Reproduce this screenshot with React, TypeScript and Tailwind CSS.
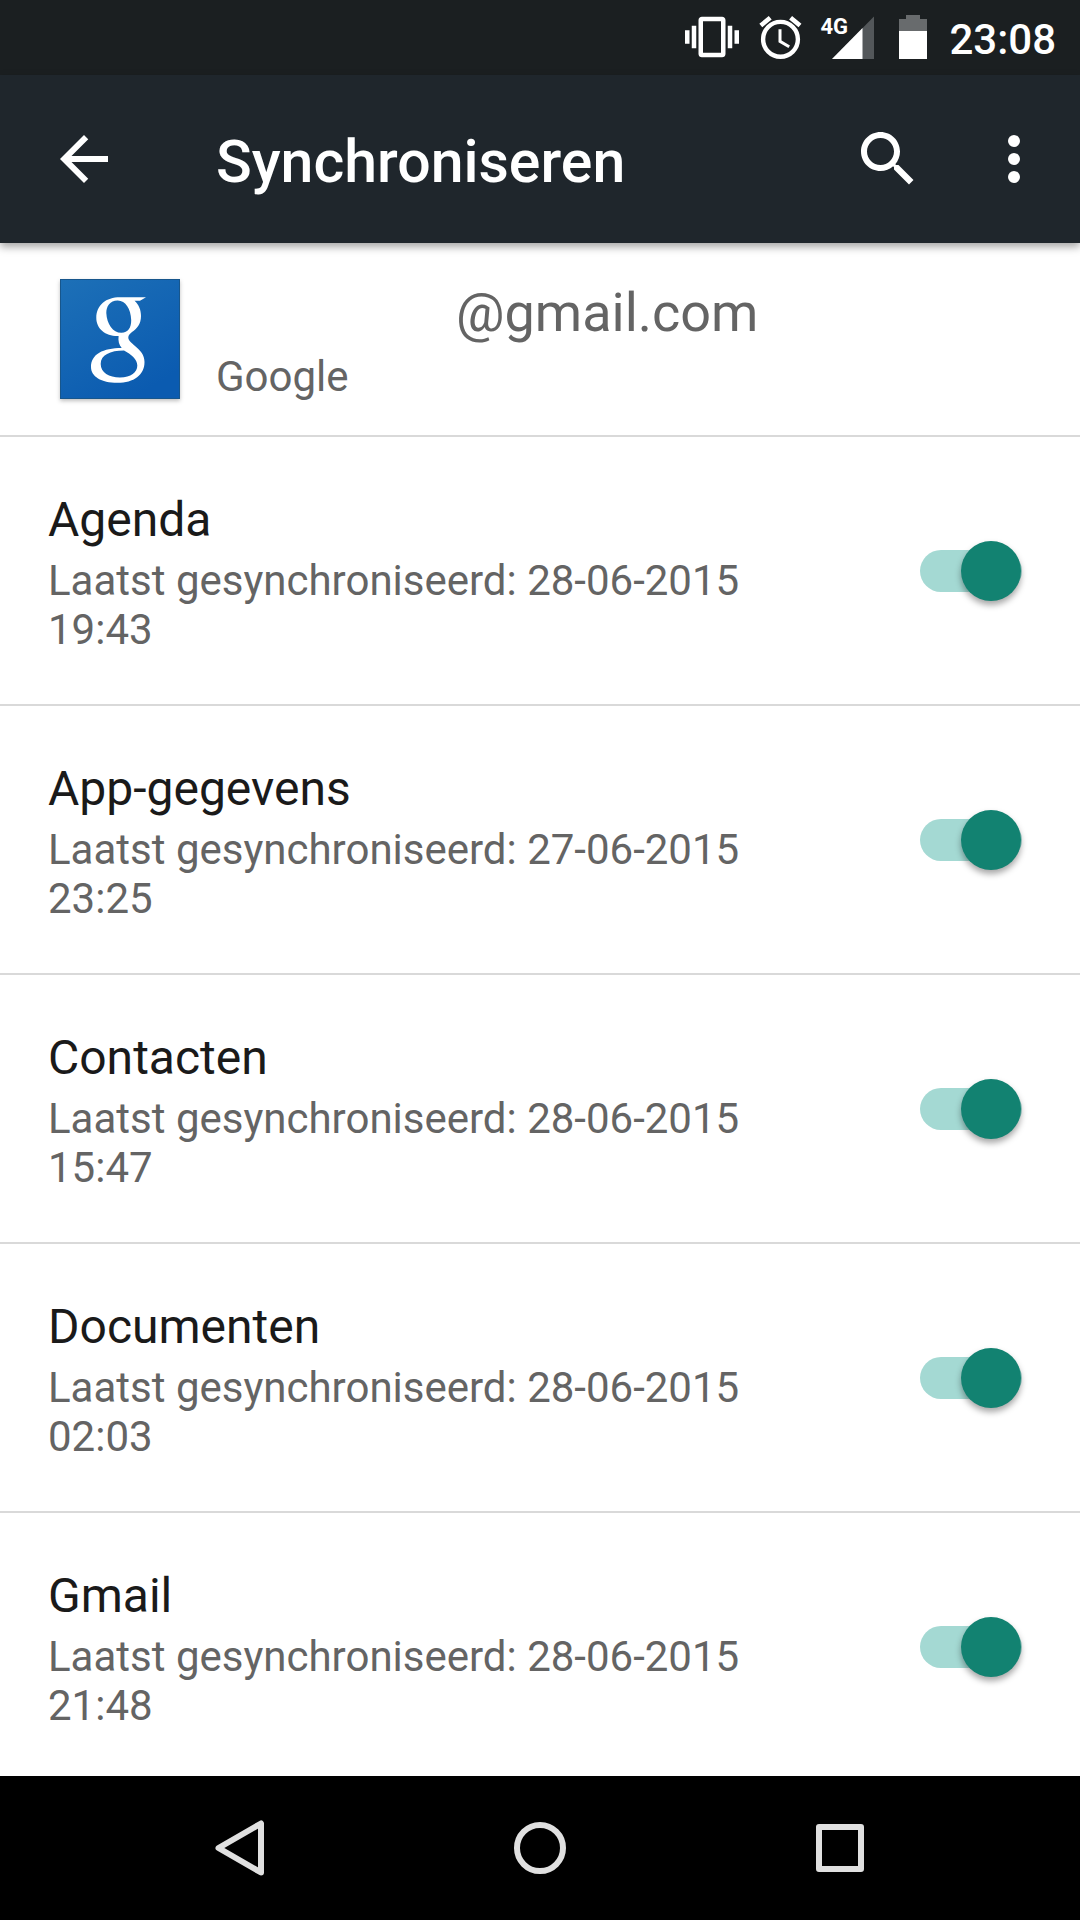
const accounts = [
  { name: "Agenda", date: "28-06-2015", time: "19:43" },
  { name: "App-gegevens", date: "27-06-2015", time: "23:25" },
  { name: "Contacten", date: "28-06-2015", time: "15:47" },
  { name: "Documenten", date: "28-06-2015", time: "02:03" },
  { name: "Gmail", date: "28-06-2015", time: "21:48" },
];

function StatusBar() {
  return (
    <div className="flex h-[75px] shrink-0 items-start justify-end bg-[#1b1f21] pt-[10px] pr-[24px] text-white">
      {/* Vibrate */}
      <svg className="mr-[17px] size-[54px]" viewBox="0 0 24 24" fill="currentColor" aria-hidden="true">
        <path d="M0 15h2V9H0v6zm3 2h2V7H3v10zm19-8v6h2V9h-2zm-3 8h2V7h-2v10zM16.5 3h-9C6.67 3 6 3.67 6 4.5v15c0 .83.67 1.5 1.5 1.5h9c.83 0 1.5-.67 1.5-1.5v-15c0-.83-.67-1.5-1.5-1.5zM16 19H8V5h8v14z" />
      </svg>

      {/* Alarm */}
      <svg className="mr-[10px] h-[54px] w-[50px]" viewBox="0 0 50 54" fill="none" stroke="currentColor" aria-hidden="true">
        <circle cx="24.5" cy="29.3" r="17.4" strokeWidth="4.4" />
        <path d="M4.8 15.6 14.2 7.8M34.6 7.8l9.4 7.8" strokeWidth="4.6" />
        <path d="M24 19.3v12l9.2 5.5" strokeWidth="3" />
      </svg>

      {/* Mobile signal */}
      <div className="relative mr-[17px] h-[54px] w-[58px]">
        <svg className="h-[54px] w-[58px]" viewBox="0 0 58 54" aria-hidden="true">
          <path d="M16 49 58 6.5V49z" fill="#53575a" />
          <path d="M16 49 46.5 18V49z" fill="white" />
        </svg>
        <span className="absolute top-[5px] left-[4px] text-[22px] leading-[24px] font-bold">4G</span>
      </div>

      {/* Battery */}
      <svg className="mr-[18px] h-[54px] w-[40px]" viewBox="0 0 40 54" aria-hidden="true">
        <path d="M8 9h7V5h14v4h7v12H8z" fill="#686b6d" />
        <path d="M8 21h28v28H8z" fill="white" />
      </svg>

      <span className="pt-[3px] text-[42px] leading-[54px] font-medium">23:08</span>
    </div>
  );
}

function AppBar() {
  return (
    <header className="relative z-10 flex h-[168px] shrink-0 items-center bg-[#1f262c] pr-[30px] pl-[48px] text-white shadow-[0_4px_8px_rgba(0,0,0,0.35)]">
      <button type="button" aria-label="Terug">
        <svg className="size-[72px]" viewBox="0 0 24 24" fill="currentColor">
          <path d="M20 11H7.83l5.59-5.59L12 4l-8 8 8 8 1.41-1.41L7.83 13H20v-2z" />
        </svg>
      </button>
      <h1 className="ml-[96px] flex-1 pt-[6px] text-[59px] leading-[70px] font-medium">Synchroniseren</h1>
      <button type="button" aria-label="Zoeken" className="mr-[54px]">
        <svg className="size-[72px]" viewBox="0 0 24 24" fill="currentColor">
          <path d="M15.5 14h-.79l-.28-.27C15.41 12.59 16 11.11 16 9.5 16 5.91 13.09 3 9.5 3S3 5.91 3 9.5 5.91 16 9.5 16c1.61 0 3.09-.59 4.23-1.57l.27.28v.79l5 4.99L20.49 19l-4.99-5zm-6 0C7.01 14 5 11.99 5 9.5S7.01 5 9.5 5 14 7.01 14 9.5 11.99 14 9.5 14z" />
        </svg>
      </button>
      <button type="button" aria-label="Meer opties">
        <svg className="size-[72px]" viewBox="0 0 24 24" fill="currentColor">
          <circle cx="12" cy="6" r="2" />
          <circle cx="12" cy="12" r="2" />
          <circle cx="12" cy="18" r="2" />
        </svg>
      </button>
    </header>
  );
}

function GoogleLogo() {
  return (
    <svg className="size-[120px] shadow-[0_2px_4px_rgba(0,0,0,0.25)]" viewBox="0 0 120 120" role="img" aria-label="Google">
      <defs>
        <linearGradient id="logo-blue" x1="0" y1="0" x2="0.6" y2="1">
          <stop offset="0" stopColor="#1d70b7" />
          <stop offset="1" stopColor="#0b5bb0" />
        </linearGradient>
      </defs>
      <rect width="120" height="120" fill="url(#logo-blue)" />
      <rect x="0.5" y="0.5" width="119" height="119" fill="none" stroke="#17568c" />
      <path
        fill="white"
        fillRule="evenodd"
        d="M86 18.3 80 21.8H74.5C79 26 81 31 81 37c0 8-4 12.500-9 16-2.500 2-3.700 3.500-3.700 5.500 0 3 2.700 5 6.700 8.500 5.500 4.500 9.500 9 9.500 16 0 13-10.500 20.800-27 20.800S31 97.500 31 88c0-13 12-19 30.700-19.100C59 66 58 62 58.600 57 46 57.500 36.300 50 36.300 39c0-13 9.700-20.700 23.700-20.700zM57.500 21.500C50 21.800 46.300 27 46.300 34c.5 11 6.700 20 15.200 19.800 6.500-.3 9.800-4.800 9.700-12.800-.4-11-5.700-19.700-13.700-19.500zM64 71.500c-14 0-23.300 4.500-23.300 13.500 0 8.500 8.300 13.400 19.300 13.400s17.300-4.900 17.300-11.900c0-6.500-6.300-11-13.300-15z"
      />
    </svg>
  );
}

function AccountHeader() {
  return (
    <div className="flex items-center border-b-2 border-[#d9d9d9] py-[34px] pl-[60px] text-[#646464]">
      <GoogleLogo />
      <div className="ml-[36px] pt-[4px]">
        <p className="pl-[240px] text-[54px] leading-[63px]">@gmail.com</p>
        <p className="mt-2 text-[42px] leading-[49px]">Google</p>
      </div>
    </div>
  );
}

function SyncRow({ name, date, time }: { name: string; date: string; time: string }) {
  return (
    <label className="flex items-center border-b-2 border-[#d9d9d9] py-[50px] pr-[58px] pl-[48px]">
      <span className="flex-1 pt-[5px]">
        <span className="block text-[48px] leading-[56px] text-[#1a1a1a]">{name}</span>
        <span className="mt-2 block text-[42px] leading-[49px] text-[#646464]">
          Laatst gesynchroniseerd: {date} {time}
        </span>
      </span>
      <input
        type="checkbox"
        role="switch"
        defaultChecked
        className="relative ml-[72px] h-[42px] w-[102px] shrink-0 appearance-none rounded-full bg-[#c4c4c4] before:absolute before:-top-[9px] before:left-0 before:size-[60px] before:rounded-full before:bg-[#f1f1f1] before:shadow-[0_4px_6px_rgba(0,0,0,0.35)] checked:bg-[#a4d9d3] checked:before:left-[41px] checked:before:bg-[#128271]"
      />
    </label>
  );
}

function NavBar() {
  return (
    <nav className="grid h-[144px] shrink-0 grid-cols-3 bg-black px-[90px] text-[#e0e0e0]">
      <button type="button" aria-label="Vorige" className="flex items-center justify-center">
        <svg className="size-[72px]" viewBox="0 0 72 72" fill="none" stroke="currentColor" strokeWidth="6" strokeLinejoin="round">
          <path d="M57 11.5v49L14.5 36z" />
        </svg>
      </button>
      <button type="button" aria-label="Startscherm" className="flex items-center justify-center">
        <svg className="size-[72px]" viewBox="0 0 72 72" fill="none" stroke="currentColor" strokeWidth="6">
          <circle cx="36" cy="36" r="23" />
        </svg>
      </button>
      <button type="button" aria-label="Overzicht" className="flex items-center justify-center">
        <svg className="size-[72px]" viewBox="0 0 72 72" fill="none" stroke="currentColor" strokeWidth="6" strokeLinejoin="round">
          <rect x="15" y="15" width="42" height="42" />
        </svg>
      </button>
    </nav>
  );
}

export default function App() {
  return (
    <div className="flex h-screen flex-col bg-white font-[Roboto,sans-serif]">
      <StatusBar />
      <AppBar />
      <main className="min-h-0 flex-1 overflow-y-auto [scrollbar-width:none]">
        <AccountHeader />
        {accounts.map((account) => (
          <SyncRow key={account.name} {...account} />
        ))}
      </main>
      <NavBar />
    </div>
  );
}
